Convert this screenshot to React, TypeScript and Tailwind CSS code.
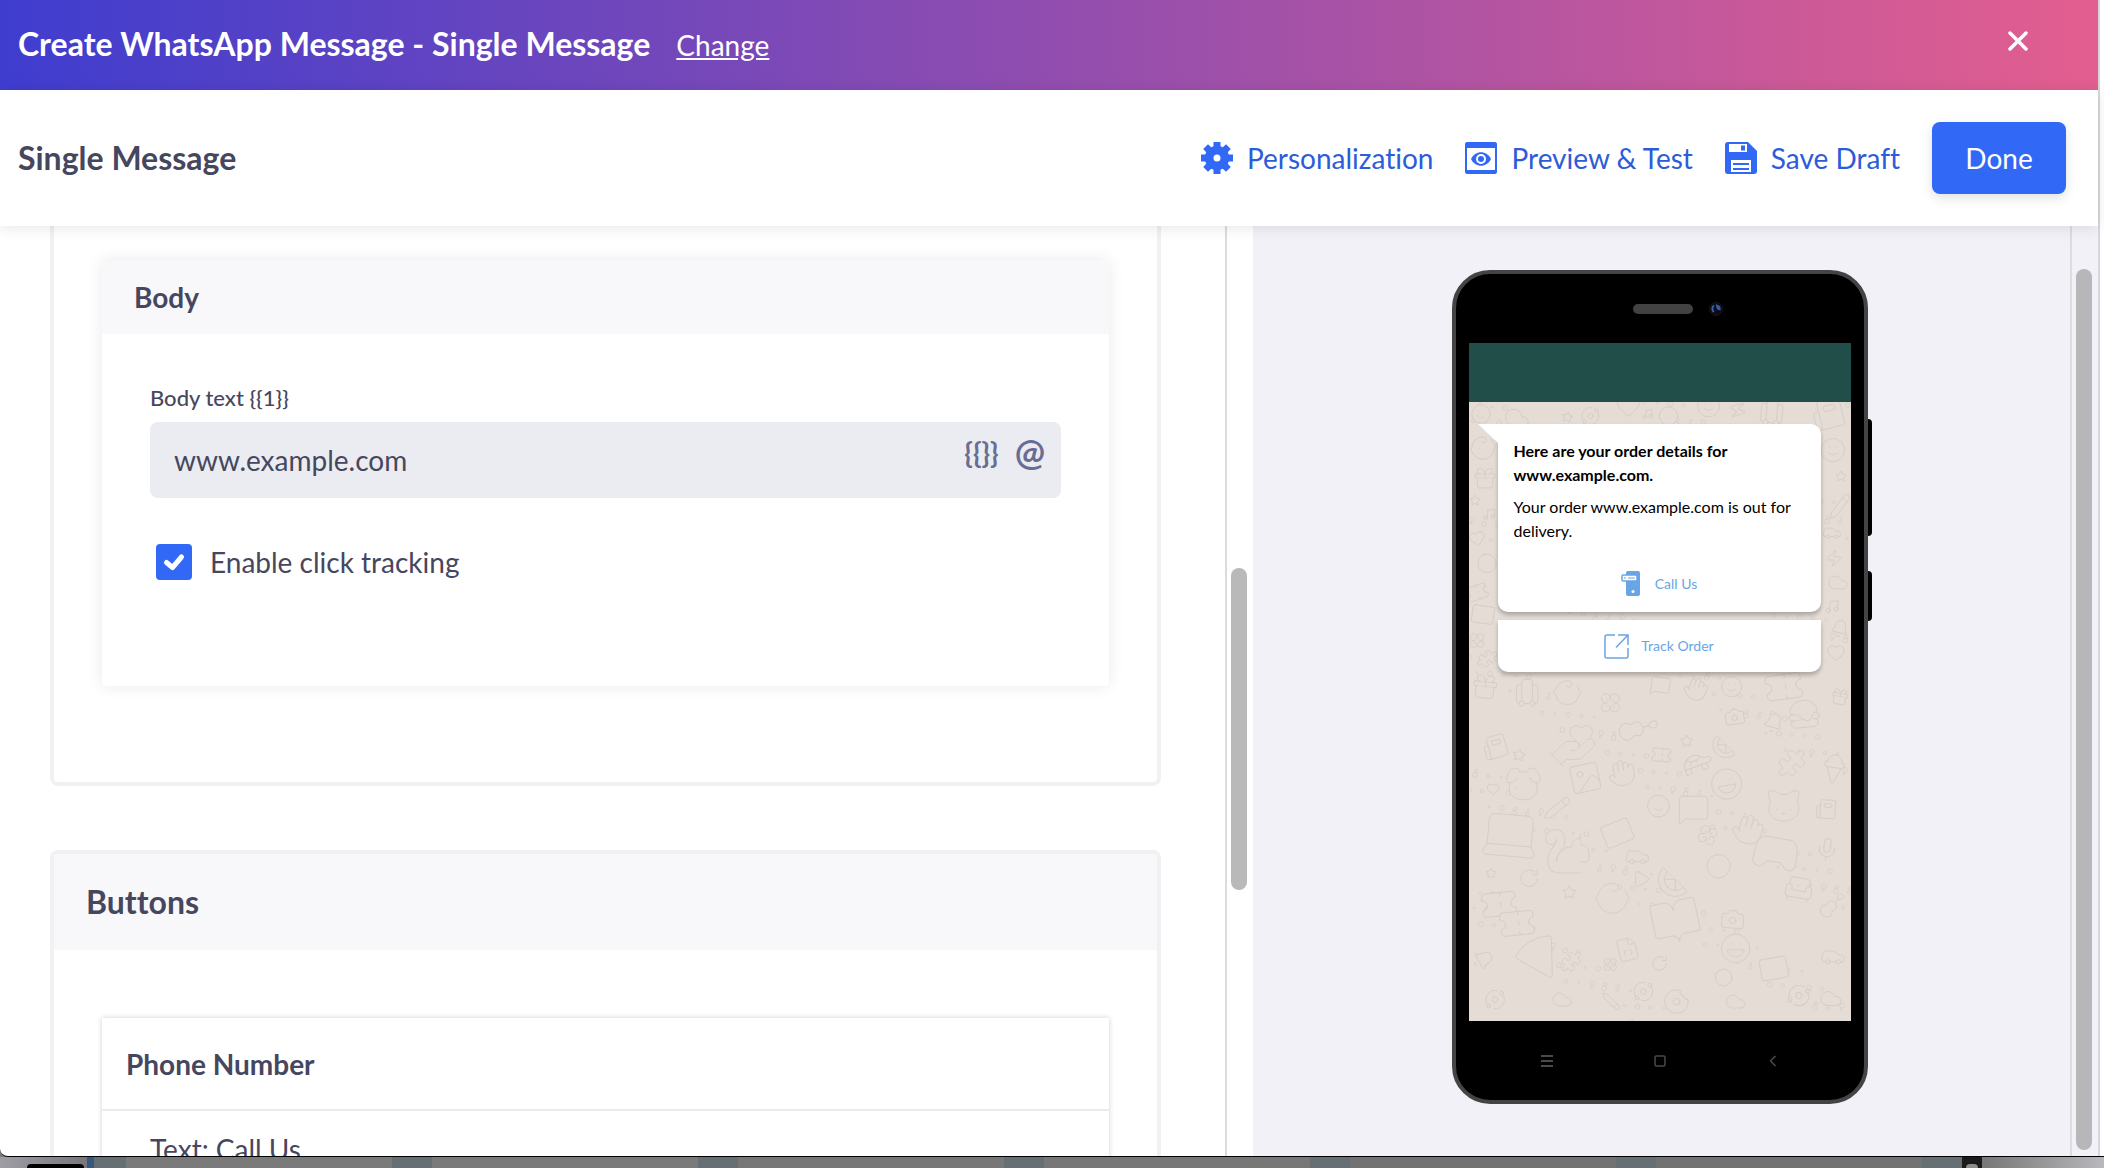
import { useState } from 'react'
import type { ReactNode } from 'react'
import {
  Armchair,
  Baby,
  Bell,
  BookOpen,
  Camera,
  Car,
  Cat,
  Citrus,
  Clock,
  Cloud,
  Compass,
  Donut,
  Dog,
  FileCode,
  Flower,
  Gamepad2,
  Gift,
  Guitar,
  Hamburger,
  Hand,
  HandHeart,
  Heart,
  IceCreamCone,
  Image,
  Laptop,
  Laugh,
  Luggage,
  Mail,
  MessageSquare,
  Mic,
  Music,
  Newspaper,
  Orbit,
  Pencil,
  Pizza,
  Play,
  Puzzle,
  RotateCw,
  Smile,
  Squirrel,
  Star,
  Ticket,
  Turtle,
  Zap
} from 'lucide-react'
import type { LucideIcon } from 'lucide-react'

// Wallpaper doodles: icon, centre x, centre y, size, rotation
const DOODLES: [LucideIcon, number, number, number, number][] = [
  [Smile, 12, 12, 22, 0],
  [Cloud, 48, 16, 28, 10],
  [Star, 98, 15, 12, 12],
  [Orbit, 121, 14, 20, 0],
  [Heart, 159, 4, 26, 0],
  [Music, 178, 12, 12, 0],
  [Clock, 199, 14, 22, 0],
  [Smile, 239, 4, 26, 0],
  [Zap, 268, 8, 20, 30],
  [Luggage, 302, 10, 32, 5],
  [Newspaper, 358, 12, 34, -14],
  [Baby, 14, 46, 30, -10],
  [Gift, 16, 76, 26, 0],
  [Star, 6, 98, 12, 0],
  [Music, 20, 112, 14, 0],
  [Heart, 8, 136, 18, -12],
  [Compass, 18, 161, 22, 0],
  [Ticket, 8, 190, 24, -20],
  [Mail, 14, 212, 26, 8],
  [Flower, 8, 238, 18, 0],
  [Puzzle, 18, 256, 20, 15],
  [Smile, 363, 48, 28, 0],
  [Star, 371, 74, 12, 0],
  [Pencil, 370, 104, 26, -8],
  [Car, 362, 130, 20, 0],
  [Zap, 364, 156, 18, 0],
  [Cloud, 368, 180, 22, 0],
  [Music, 362, 204, 16, 0],
  [Bell, 370, 226, 20, 14],
  [Heart, 366, 250, 20, 0],
  [Gift, 16, 284, 30, 6],
  [Luggage, 58, 290, 32, 0],
  [Baby, 98, 290, 32, 0],
  [Flower, 141, 300, 24, 0],
  [MessageSquare, 191, 283, 22, 8],
  [Hand, 226, 286, 26, 20],
  [Smile, 262, 284, 24, 0],
  [Ticket, 314, 284, 42, -8],
  [Gift, 370, 294, 20, 10],
  [Guitar, 168, 326, 38, 30],
  [Hamburger, 334, 311, 36, -6],
  [Camera, 265, 314, 22, -8],
  [Bell, 304, 320, 22, 18],
  [Newspaper, 26, 344, 26, -16],
  [HandHeart, 103, 343, 54, 0],
  [Star, 50, 352, 14, 8],
  [Star, 217, 338, 14, 0],
  [Image, 116, 375, 36, -12],
  [Dog, 54, 381, 42, 0],
  [Hand, 152, 370, 30, -8],
  [Turtle, 228, 360, 34, -20],
  [Ticket, 192, 352, 22, 6],
  [Laugh, 257, 381, 36, -10],
  [Citrus, 254, 344, 26, 0],
  [Puzzle, 322, 360, 30, 0],
  [IceCreamCone, 364, 366, 34, 8],
  [Cat, 314, 403, 40, 0],
  [Newspaper, 356, 406, 22, 4],
  [Smile, 189, 403, 26, 0],
  [MessageSquare, 224, 406, 34, 0],
  [Pencil, 88, 405, 28, 6],
  [Heart, 24, 386, 14, 0],
  [Laptop, 41, 431, 66, 5],
  [Squirrel, 98, 448, 52, 0],
  [Mail, 148, 430, 34, -22],
  [Car, 168, 453, 26, 0],
  [Flower, 238, 432, 22, 20],
  [Hand, 278, 426, 34, 16],
  [Gamepad2, 306, 450, 52, 10],
  [Mic, 357, 446, 26, 8],
  [Clock, 249, 463, 28, 0],
  [Citrus, 203, 479, 34, 0],
  [Play, 172, 476, 20, 0],
  [RotateCw, 60, 475, 22, 0],
  [Baby, 143, 495, 40, 0],
  [Armchair, 329, 486, 34, 10],
  [Star, 22, 470, 12, 0],
  [Star, 100, 489, 15, 0],
  [Ticket, 30, 501, 40, -6],
  [Ticket, 48, 520, 40, -6],
  [Guitar, 362, 502, 28, 0],
  [BookOpen, 206, 518, 54, -12],
  [Camera, 263, 516, 26, 4],
  [Pizza, 68, 550, 48, 14],
  [Puzzle, 102, 558, 22, 0],
  [FileCode, 158, 546, 26, -14],
  [RotateCw, 190, 560, 18, 0],
  [Laugh, 266, 545, 34, 0],
  [Mail, 304, 565, 32, -10],
  [Car, 363, 553, 26, 0],
  [Flower, 141, 561, 16, 0],
  [Compass, 254, 574, 20, 0],
  [Bell, 14, 556, 22, 60],
  [Orbit, 26, 596, 22, 0],
  [Cloud, 93, 596, 22, 0],
  [Pencil, 142, 598, 20, 90],
  [Orbit, 174, 588, 22, 0],
  [Donut, 207, 598, 28, 0],
  [Cloud, 266, 598, 22, 0],
  [Orbit, 329, 592, 24, 20],
  [Cloud, 361, 595, 24, 0]
]

const DOTS = Array.from({ length: 420 }, (_, i) => ({
  x: (i * 137 + 11) % 381,
  y: (i * 89 + 7 * (i % 5)) % 619,
  r: 1 + (i % 3) * 0.7
}))

function Wallpaper() {
  return (
    <svg
      className="absolute inset-0 h-full w-full text-[#d5ccc5]"
      viewBox="0 0 381 619"
      preserveAspectRatio="xMidYMin slice"
      aria-hidden="true"
    >
      {DOTS.map((d, i) => (
        <circle key={i} cx={d.x} cy={d.y} r={d.r} fill="none" stroke="currentColor" strokeWidth="0.7" />
      ))}
      {DOODLES.map(([Icon, x, y, size, angle], i) => (
        <g key={i} transform={`rotate(${angle} ${x} ${y})`}>
          <Icon
            x={x - size / 2}
            y={y - size / 2}
            size={size}
            strokeWidth={0.9}
            absoluteStrokeWidth
            fill="#e4dcd5"
          />
        </g>
      ))}
    </svg>
  )
}

function GearIcon() {
  return (
    <svg viewBox="0 0 32 32" className="h-8 w-8" fill="#3169f6" aria-hidden="true">
      <path
        fillRule="evenodd"
        d="M12.500 0h7v4.200l2.300 1L25 2.200 29.800 7l-3 3.200 1 2.300H32v7h-4.200l-1 2.300 3 3.200-4.800 4.800-3.200-3-2.300 1V32h-7v-4.200l-2.300-1-3.200 3L2.200 25l3-3.200-1-2.300H0v-7h4.200l1-2.300-3-3.200L7 2.200l3.200 3 2.300-1zM16 12.500a3.500 3.500 0 1 0 0 7 3.500 3.500 0 0 0 0-7z"
      />
    </svg>
  )
}

function PreviewIcon() {
  return (
    <svg viewBox="0 0 32 32" className="h-8 w-8" aria-hidden="true">
      <rect x="1" y="1" width="30" height="30" rx="2" fill="#fff" stroke="#3169f6" strokeWidth="2" />
      <path d="M0 6V3a3 3 0 0 1 3-3h26a3 3 0 0 1 3 3v3zM0 28h32v1a3 3 0 0 1-3 3H3a3 3 0 0 1-3-3z" fill="#3169f6" />
      <path d="M6 17c4-9 16-9 20 0-4 9-16 9-20 0z" fill="#3169f6" />
      <circle cx="16" cy="17" r="4" fill="#3169f6" stroke="#fff" strokeWidth="2" />
    </svg>
  )
}

function SaveIcon() {
  return (
    <svg viewBox="0 0 32 32" className="h-8 w-8" aria-hidden="true">
      <path d="M3 0h20l9 9v20a3 3 0 0 1-3 3H3a3 3 0 0 1-3-3V3a3 3 0 0 1 3-3z" fill="#3169f6" />
      <path d="M4 2h18v8H4zM6 18h20v12H6z" fill="#fff" />
      <path d="M16 3.500h4v5h-4zM8 21h16v2H8zM8 26h16v2H8z" fill="#3169f6" />
    </svg>
  )
}

function ToolbarAction({ icon, label }: { icon: ReactNode; label: string }) {
  return (
    <button type="button" className="flex items-center gap-[14px] text-[28px] leading-9 text-[#2d5cd8]">
      {icon}
      {label}
    </button>
  )
}

function PhonePreview() {
  return (
    <div className="relative h-[834px] w-[416px] shrink-0">
      {/* Side keys */}
      <div className="absolute top-[149px] -right-1 h-[117px] w-2 rounded-r-sm bg-black" />
      <div className="absolute top-[301px] -right-1 h-[50px] w-2 rounded-r-sm bg-black" />

      <div className="relative flex h-full flex-col rounded-[38px] border-4 border-[#444] bg-black px-[13px]">
        <div className="flex h-[69px] shrink-0 items-center justify-center gap-4">
          <span className="ml-9 h-[10px] w-[60px] rounded-full bg-[#424242]" />
          <svg viewBox="0 0 14 14" className="h-[14px] w-[14px]" aria-hidden="true">
            <circle cx="7" cy="7" r="6.500" fill="#0b0d12" stroke="#15171c" />
            <path d="M5 3.500a4 4 0 0 0 0 6.500" fill="none" stroke="#3c5fa8" strokeWidth="2" />
            <path d="M6.500 2.500a4.500 4.500 0 0 1 5 6L8 7.500z" fill="#3558a8" />
          </svg>
        </div>

        <div className="h-[59px] shrink-0 bg-[#214e49]" />
        <div className="relative flex-1 overflow-hidden bg-[#e4dcd5]">
          <Wallpaper />
          <div className="relative mt-[22px] mr-[30px] ml-[29px] flex flex-col gap-2">
            <div className="relative flex h-[188px] flex-col rounded-[10px] rounded-tl-none bg-white px-4 pt-[15px] text-base leading-6 text-black shadow-[0_3px_4px_rgba(0,0,0,0.25)]">
              <svg viewBox="0 0 21 20" className="absolute top-0 -left-5 h-5 w-[21px]" aria-hidden="true">
                <path d="M0 0h21v20z" fill="#fff" />
              </svg>
              <p className="font-bold">
                Here are your order details for
                <br />
                www.example.com.
              </p>
              <p className="mt-2">
                Your order www.example.com is out for
                <br />
                delivery.
              </p>
              <a href="#call" className="mt-7 flex items-center justify-center gap-[15px] text-sm text-[#69a5e4]">
                <svg viewBox="0 0 19 26" className="h-[26px] w-[19px]" aria-hidden="true">
                  <rect x="5" y="0" width="14" height="25" rx="2" fill="#69a5e4" />
                  <rect x="1" y="4" width="15" height="6" rx="1" fill="#fff" stroke="#69a5e4" strokeWidth="1.500" />
                  <path d="M3 7h2M7 7h7" stroke="#69a5e4" strokeWidth="1.200" />
                  <circle cx="12" cy="20.500" r="1.500" fill="#fff" />
                </svg>
                Call Us
              </a>
            </div>
            <a
              href="#track"
              className="flex h-[52px] items-center justify-center gap-3 rounded-b-[10px] bg-white text-sm text-[#69a5e4] shadow-[0_3px_4px_rgba(0,0,0,0.25)]"
            >
              <svg
                viewBox="0 0 25 25"
                className="h-[25px] w-[25px]"
                fill="none"
                stroke="#69a5e4"
                strokeWidth="1.500"
                aria-hidden="true"
              >
                <path d="M11 1H3a2 2 0 0 0-2 2v19a2 2 0 0 0 2 2h19a2 2 0 0 0 2-2v-8M14 1h10v10M24 1L12 13.500" />
              </svg>
              Track Order
            </a>
          </div>
        </div>

        <div className="flex h-[79px] shrink-0 items-center justify-between px-[72px]">
          <svg viewBox="0 0 12 12" className="h-3 w-3" stroke="#4a4a4a" strokeWidth="2" aria-hidden="true">
            <path d="M0 1h12M0 6h12M0 11h12" />
          </svg>
          <svg viewBox="0 0 12 12" className="h-3 w-3" fill="none" stroke="#4a4a4a" strokeWidth="1.500" aria-hidden="true">
            <rect x="1" y="1" width="10" height="10" rx="1.500" />
          </svg>
          <svg viewBox="0 0 12 12" className="h-3 w-3" fill="none" stroke="#4a4a4a" strokeWidth="1.500" aria-hidden="true">
            <path d="M8.500 1l-5 5 5 5" />
          </svg>
        </div>
      </div>
    </div>
  )
}

export default function App() {
  const [bodyText, setBodyText] = useState('www.example.com')
  const [tracking, setTracking] = useState(true)

  return (
    <div className="flex h-screen flex-col overflow-hidden bg-[#777a7c] font-[Lato,sans-serif] text-[#46475e] [font-variant-ligatures:none]">
      <div className="flex min-h-0 flex-1 overflow-hidden rounded-bl-lg border-b border-black bg-white">
        <div className="flex min-w-0 flex-1 flex-col">
          <header className="flex h-[90px] shrink-0 items-center bg-linear-to-r/srgb from-[#3f3dcf] to-[#e35e8f] pr-[70px] pl-[18px] text-white">
            <div className="flex items-baseline gap-[26px]">
              <h1 className="text-[32px] leading-10 font-bold">Create WhatsApp Message - Single Message</h1>
              <a href="#change" className="text-[28px] underline">
                Change
              </a>
            </div>
            <button type="button" aria-label="Close" className="mb-2 ml-auto">
              <svg viewBox="0 0 20 20" className="h-5 w-5" stroke="#fff" strokeWidth="3.500" strokeLinecap="round">
                <path d="M2 2l16 16M18 2L2 18" />
              </svg>
            </button>
          </header>

          <div className="relative z-10 flex h-[136px] shrink-0 items-center justify-between bg-white pr-8 pl-[18px] shadow-[0_2px_14px_rgba(0,0,0,0.1)]">
            <h2 className="text-[32px] leading-10 font-bold">Single Message</h2>
            <div className="flex items-center gap-8">
              <ToolbarAction icon={<GearIcon />} label="Personalization" />
              <ToolbarAction icon={<PreviewIcon />} label="Preview & Test" />
              <ToolbarAction icon={<SaveIcon />} label="Save Draft" />
              <button
                type="button"
                className="h-[72px] w-[134px] rounded-lg bg-[#3169f6] text-[28px] text-white shadow-[0_4px_12px_rgba(0,0,0,0.12)]"
              >
                Done
              </button>
            </div>
          </div>

          <div className="flex min-h-0 flex-1">
            <main className="min-w-0 flex-1 overflow-hidden pr-16 pl-[50px]">
              <section className="rounded-b-lg border-4 border-t-0 border-[#f1f1f4] px-12 pt-[34px] pb-24">
                <div className="h-[426px] rounded bg-white shadow-[0_0_16px_rgba(0,0,0,0.09)]">
                  <h3 className="flex h-[74px] items-center rounded-t bg-[#f8f8fb] px-8 text-[28px] font-bold">Body</h3>
                  <div className="px-12 pt-12">
                    <label htmlFor="body-text" className="block text-[22px] leading-8 font-medium">
                      Body text {'{{1}}'}
                    </label>
                    <div className="mt-2 flex h-[76px] items-center rounded-lg bg-[#ebecf1] pr-4 pl-6">
                      <input
                        id="body-text"
                        type="text"
                        value={bodyText}
                        onChange={(e) => setBodyText(e.target.value)}
                        className="h-full min-w-0 flex-1 bg-transparent text-[28px] outline-none"
                      />
                      <div className="mb-4 flex items-center gap-4 text-[28px] leading-8 font-bold text-[#696c94]">
                        <button type="button" aria-label="Insert variable">
                          {'{{}}'}
                        </button>
                        <button type="button" aria-label="Insert attribute" className="text-4xl leading-8">
                          @
                        </button>
                      </div>
                    </div>
                    <label className="mt-[46px] flex items-center gap-[18px] pl-[6px] text-[28px] leading-9">
                      <span className="relative h-9 w-9">
                        <input
                          type="checkbox"
                          checked={tracking}
                          onChange={(e) => setTracking(e.target.checked)}
                          className="peer block h-9 w-9 appearance-none rounded border-2 border-[#3169f6] checked:bg-[#3169f6]"
                        />
                        <svg
                          viewBox="0 0 36 36"
                          className="pointer-events-none absolute inset-0 hidden h-9 w-9 peer-checked:block"
                          fill="none"
                          stroke="#fff"
                          strokeWidth="5"
                          strokeLinecap="round"
                          strokeLinejoin="round"
                        >
                          <path d="M10.500 18.500l6 5L25.500 13" />
                        </svg>
                      </span>
                      Enable click tracking
                    </label>
                  </div>
                </div>
              </section>

              <section className="mt-16 rounded-t-lg border-4 border-b-0 border-[#f1f1f4]">
                <h2 className="flex h-24 items-center bg-[#f8f8fb] px-8 text-[32px] font-bold">Buttons</h2>
                <div className="px-12 pt-[68px]">
                  <div className="bg-white shadow-[0_0_5px_rgba(0,0,0,0.2)]">
                    <h3 className="flex h-[93px] items-center border-b-2 border-[#ebebef] px-6 text-[28px] font-bold">
                      Phone Number
                    </h3>
                    <p className="px-12 pt-[18px] pb-16 text-[28px] leading-10">Text: Call Us</p>
                  </div>
                </div>
              </section>
            </main>

            <div className="w-7 shrink-0 border-l-2 border-[#dcdcdc] bg-white pt-[342px] pl-1">
              <div className="h-[322px] w-4 rounded-full bg-[#b9b9b9]" />
            </div>

            <aside className="flex w-[845px] shrink-0 bg-[#f2f1f8]">
              <div className="flex flex-1 justify-center pt-11 pr-1">
                <PhonePreview />
              </div>
              <div className="flex w-7 flex-col border-l-2 border-[#dcdbe0] pt-[43px] pb-[6px] pl-1">
                <div className="w-4 flex-1 rounded-full bg-[#b7b7b9]" />
              </div>
            </aside>
          </div>
        </div>
        <div className="w-[6px] shrink-0 border-l-2 border-[#d8d8dc] bg-white" />
      </div>

      {/* Dimmed page behind the dialog */}
      <div className="flex h-[11px] shrink-0 bg-[#666f73]" aria-hidden="true">
        <div className="flex w-[87px] items-end bg-linear-to-r from-[#a09da6] to-[#77767c] pl-[27px]">
          <div className="h-1 w-[57px] rounded-t bg-black" />
        </div>
        <div className="w-[7px] bg-[#35597f]" />
        <div className="flex flex-1 gap-10 pl-8">
          <div className="flex-1 bg-[#7a7a7b]" />
          <div className="flex-1 bg-[#7a7a7b]" />
          <div className="flex-1 bg-[#777778]" />
          <div className="flex-1 bg-[#777778]" />
          <div className="flex-1 bg-[#727273]" />
          <div className="mr-10 flex-1 bg-[#727273]" />
        </div>
        <div className="flex w-5 items-end justify-center bg-[#1b1b1c]">
          <div className="h-1 w-3 rounded-t-full bg-[#8d8d8d]" />
        </div>
        <div className="w-[122px] bg-linear-to-r from-[#777] to-[#b9b9bd]" />
      </div>
    </div>
  )
}
